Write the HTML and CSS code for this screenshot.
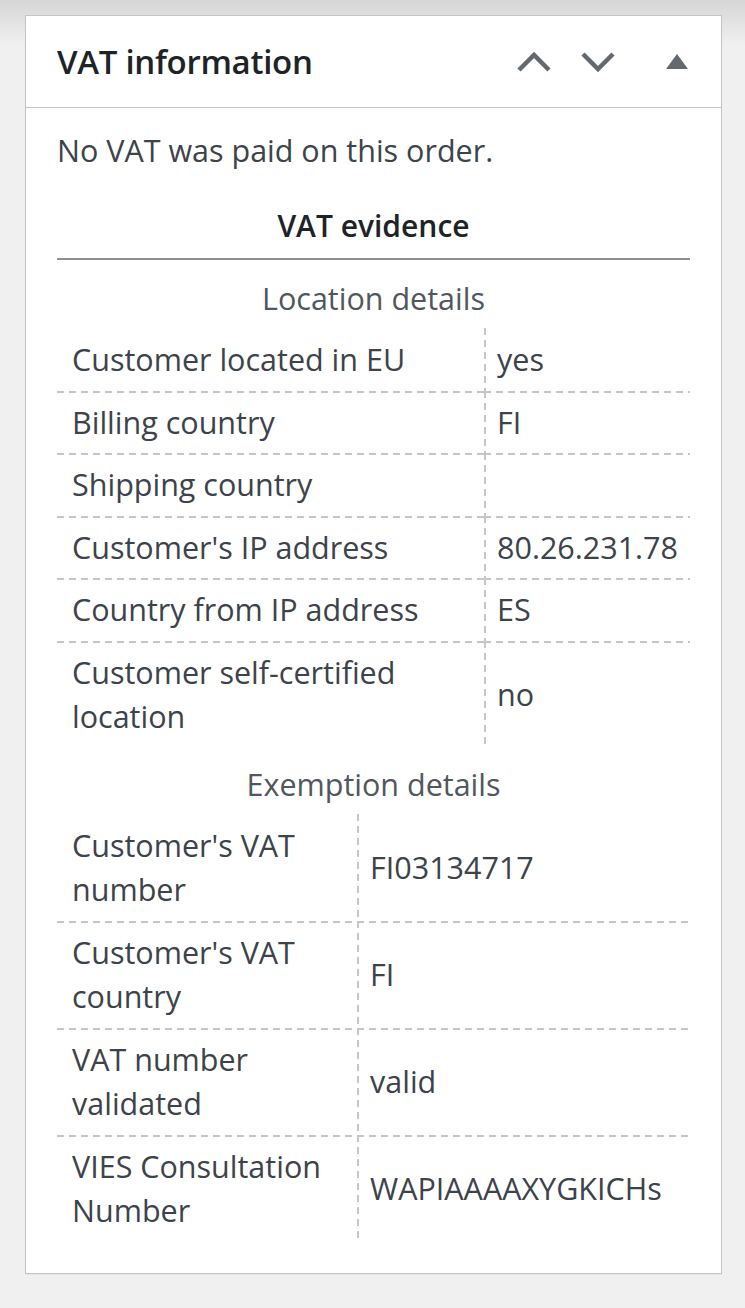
FILE: index.html
```html
<!DOCTYPE html>
<html lang="en">
<head>
    <meta charset="UTF-8">
    <meta name="viewport" content="width=device-width, initial-scale=1.0">
    <title>VAT information</title>
    <link rel="stylesheet" href="styles.css">
</head>
<body>
    <div class="postbox">
        <div class="postbox-header">
            <h2 class="hndle">VAT information</h2>
            <div class="handle-actions">
                <span class="handle-btn">
                    <svg width="36" height="22" viewBox="0 0 36 22"><polyline points="3,19 18,4 33,19" fill="none" stroke="#646970" stroke-width="4.5"/></svg>
                </span>
                <span class="handle-btn">
                    <svg width="36" height="22" viewBox="0 0 36 22"><polyline points="3,3 18,18 33,3" fill="none" stroke="#646970" stroke-width="4.5"/></svg>
                </span>
                <span class="handle-btn toggle">
                    <svg width="22" height="16" viewBox="0 0 22 16"><polygon points="0,15 11,0 22,15" fill="#646970"/></svg>
                </span>
            </div>
        </div>
        <div class="inside">
            <p class="note">No VAT was paid on this order.</p>
            <h4 class="evidence-title">VAT evidence</h4>

            <table class="evidence location">
                <caption>Location details</caption>
                <tr><th>Customer located in EU</th><td>yes</td></tr>
                <tr><th>Billing country</th><td>FI</td></tr>
                <tr><th>Shipping country</th><td></td></tr>
                <tr><th>Customer's IP address</th><td>80.26.231.78</td></tr>
                <tr><th>Country from IP address</th><td>ES</td></tr>
                <tr><th>Customer self-certified location</th><td>no</td></tr>
            </table>

            <table class="evidence exemption">
                <caption>Exemption details</caption>
                <tr><th>Customer's VAT number</th><td>FI03134717</td></tr>
                <tr><th>Customer's VAT country</th><td>FI</td></tr>
                <tr><th>VAT number validated</th><td>valid</td></tr>
                <tr><th>VIES Consultation Number</th><td>WAPIAAAAXYGKICHs</td></tr>
            </table>
        </div>
    </div>
</body>
</html>
```

FILE: styles.css
```css
body{
    margin: 0;
    padding: 15px 23px 33px 25px;
    background: linear-gradient(#d6d6d7 0, #f0f0f1 45px) no-repeat, #f0f0f1;
    font-family: "Open Sans", "Noto Sans", sans-serif;
    color: #3c434a;
}
.postbox{
    background: #fff;
    border: 1px solid #c3c4c7;
    box-shadow: 0 1px 1px rgba(0,0,0,0.04);
}
.postbox-header{
    display: flex;
    align-items: center;
    justify-content: space-between;
    height: 91px;
    border-bottom: 1px solid #c3c4c7;
    padding-left: 31px;
}
.hndle{
    margin: 0;
    font-size: 33px;
    font-weight: 600;
    color: #1d2327;
    letter-spacing: -0.3px;
}
.handle-actions{
    display: flex;
    align-items: center;
    padding-right: 12px;
}
.handle-btn{
    width: 64px;
    height: 40px;
    display: flex;
    align-items: center;
    justify-content: center;
}
.handle-btn.toggle{
    margin-left: 15px;
}
.inside{
    padding: 20px 31px 31px 31px;
}
.note{
    margin: 0;
    font-size: 30.5px;
    line-height: 44px;
}
.evidence-title{
    margin: 32px 0 0 0;
    font-size: 30px;
    line-height: 44px;
    font-weight: 600;
    color: #1d2327;
    text-align: center;
    padding-bottom: 10px;
    border-bottom: 2px solid #8c8f94;
}
.evidence{
    width: 100%;
    table-layout: fixed;
    border-collapse: collapse;
    font-size: 30.5px;
    line-height: 44.5px;
}
.evidence caption{
    color: #50575e;
    line-height: 44px;
    padding-bottom: 8px;
}
.location caption{
    padding-top: 16px;
}
.exemption caption{
    padding-top: 14px;
}
.evidence th,
.evidence td{
    text-align: left;
    font-weight: normal;
    vertical-align: middle;
    padding: 9px 15px;
    background-repeat: no-repeat;
}
.evidence td{
    padding-left: 13px;
    background-image: repeating-linear-gradient(180deg, #c6c6c6 0 7px, transparent 7px 12px);
    background-size: 2px 100%;
    background-position: left top;
}
.evidence tr + tr th{
    background-image: repeating-linear-gradient(90deg, #c6c6c6 0 7px, transparent 7px 12px);
    background-size: 100% 2px;
    background-position: left top;
}
.evidence tr + tr td{
    background-image: repeating-linear-gradient(90deg, #c6c6c6 0 7px, transparent 7px 12px),
        repeating-linear-gradient(180deg, #c6c6c6 0 7px, transparent 7px 12px);
    background-size: 100% 2px, 2px 100%;
    background-position: left top, left top;
}
.location th{
    width: 397px;
}
.exemption th{
    width: 270px;
}
```
